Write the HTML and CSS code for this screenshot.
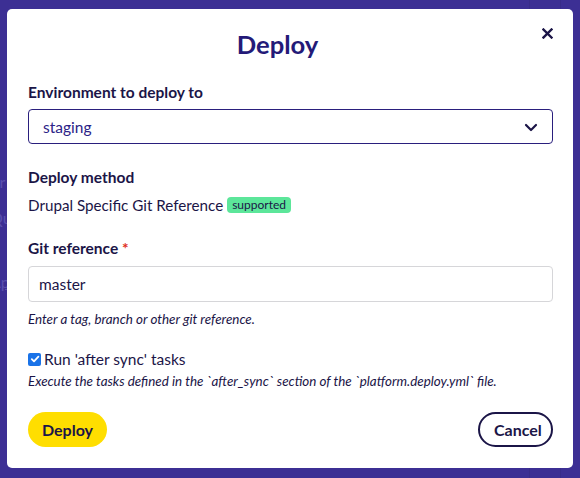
FILE: index.html
```html
<!DOCTYPE html>
<html lang="en">
<head>
<meta charset="utf-8">
<title>Deploy</title>
<link rel="stylesheet" href="styles.css">
</head>
<body>
<div class="page">
  <div class="bg-grid"></div>
  <div class="bg-text">
    <p class="bg-line l1">Pr</p>
    <p class="bg-line l2">Qui</p>
    <p class="bg-line l3"><u>Ap</u></p>
  </div>
</div>
<div class="modal" role="dialog" aria-labelledby="title">
  <button class="close" aria-label="Close">
    <svg width="11" height="11" viewBox="0 0 11 11"><path d="M1.5 1.5 L9.5 9.5 M9.5 1.5 L1.5 9.5" stroke="#1b1547" stroke-width="2.4" stroke-linecap="square"/></svg>
  </button>
  <h1 id="title" class="title">Deploy</h1>

  <label class="label first">Environment to deploy to</label>
  <div class="select">
    <span>staging</span>
    <svg width="14" height="9" viewBox="0 0 14 9"><path d="M2 2 L7 7 L12 2" fill="none" stroke="#1b1547" stroke-width="2.2" stroke-linecap="round" stroke-linejoin="round"/></svg>
  </div>

  <div class="label section">Deploy method</div>
  <div class="method">Drupal Specific Git Reference <span class="badge">supported</span></div>

  <label class="label section">Git reference <span class="req">*</span></label>
  <div class="input">master</div>
  <p class="help">Enter a tag, branch or other git reference.</p>

  <label class="check">
    <span class="box"><svg width="10" height="10" viewBox="0 0 10 10"><path d="M1.8 5.2 L4 7.4 L8.4 2.6" fill="none" stroke="#fff" stroke-width="1.8" stroke-linecap="round" stroke-linejoin="round"/></svg></span>
    Run 'after sync' tasks
  </label>
  <p class="help tight">Execute the tasks defined in the `after_sync` section of the `platform.deploy.yml` file.</p>

  <div class="actions">
    <button class="btn primary">Deploy</button>
    <button class="btn secondary">Cancel</button>
  </div>
</div>
</body>
</html>
```

FILE: styles.css
```css
* { box-sizing: border-box; }
html, body { margin: 0; padding: 0; }
body {
  width: 580px;
  height: 478px;
  overflow: hidden;
  background: #3c2f94;
  font-family: Lato, "Open Sans", sans-serif;
  color: #1b1547;
}
.page { position: relative; width: 580px; height: 478px; }
.bg-grid {
  position: absolute;
  left: 529px; top: 0; width: 32px; height: 478px;
  border-left: 1px solid #382c8a;
  border-right: 1px solid #382c8a;
}
.bg-text { padding-top: 172px; margin-left: -10px; color: #5a4fae; font-size: 16px; }
.bg-line { margin: 0; line-height: 20px; }
.l2 { margin-top: 16px; }
.l3 { margin-top: 44px; }

.modal {
  position: absolute;
  left: 7px; top: 9px;
  width: 566px; height: 459px;
  background: #fff;
  border-radius: 5px;
  padding: 20px 20px 0 21px;
  display: flex;
  flex-direction: column;
}
.close {
  position: absolute;
  right: 20px; top: 19px;
  border: 0; background: none; padding: 0;
  width: 11px; height: 11px;
  display: flex;
}
.title {
  margin: 0;
  padding-right: 26px;
  text-align: center;
  font-size: 25.6px;
  line-height: 30px;
  font-weight: 700;
  color: #241a78;
}
.label {
  display: block;
  font-size: 15.5px;
  line-height: 20px;
  font-weight: 700;
  color: #1b1547;
}
.label.first { margin-top: 23px; }
.label.section { margin-top: 23px; }
.req { color: #e0321e; font-weight: 700; }
.select {
  margin-top: 7px;
  height: 35px;
  border: 1px solid #2a1f7d;
  border-radius: 4px;
  display: flex;
  align-items: center;
  justify-content: space-between;
  padding: 0 14px 0 14px;
  font-size: 15.5px;
  color: #2b2387;
}
.select svg { margin-top: 1px; }
.method {
  margin-top: 8px;
  font-size: 15.2px;
  line-height: 20px;
  display: flex;
  align-items: center;
  gap: 4px;
}
.badge {
  background: #5ce69a;
  color: #1b1547;
  font-size: 12px;
  line-height: 16px;
  height: 16px;
  padding: 0 5px;
  border-radius: 4px;
}
.input {
  margin-top: 8px;
  height: 36px;
  border: 1px solid #d6d6d9;
  border-radius: 4px;
  padding: 0 10px;
  display: flex;
  align-items: center;
  font-size: 15.5px;
  color: #1b1547;
}
.help {
  margin: 9px 0 0;
  font-size: 13.4px;
  line-height: 16px;
  font-style: italic;
  color: #1b1547;
}
.help.tight { margin-top: 4px; }
.check {
  margin-top: 22px;
  display: flex;
  align-items: center;
  gap: 3px;
  font-size: 15.5px;
  line-height: 20px;
}
.box {
  width: 13px; height: 13px;
  border-radius: 2px;
  background: #1a73e8;
  display: flex;
  align-items: center;
  justify-content: center;
}
.actions {
  margin-top: 23px;
  display: flex;
  justify-content: space-between;
}
.btn {
  height: 35px;
  border-radius: 18px;
  font-family: Lato, sans-serif;
  font-size: 16px;
  font-weight: 700;
  color: #1b1547;
  padding: 0 14px;
  cursor: pointer;
}
.primary { background: #ffde00; border: 0; width: 79px; }
.secondary { background: #fff; border: 2px solid #1b1547; width: 75px; }
```
